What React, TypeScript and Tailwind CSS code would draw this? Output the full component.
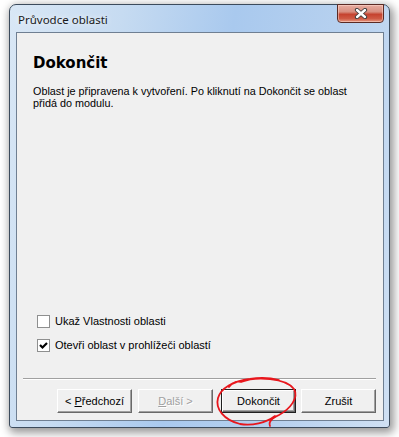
import React from 'react';

const sans = { fontFamily: '"Liberation Sans", Arial, sans-serif' };

function CloseGlyph() {
    return (
        <svg width="14" height="11" viewBox="0 0 14 11">
            <path d="M3 2 L11 9 M11 2 L3 9" stroke="#3a3a3a" strokeWidth="4.2" strokeLinecap="round" fill="none" />
            <path d="M3 2 L11 9 M11 2 L3 9" stroke="#ffffff" strokeWidth="2.4" strokeLinecap="round" fill="none" />
        </svg>
    );
}

function CheckBox({ checked }: { checked?: boolean }) {
    return (
        <div className="w-[13px] h-[13px] border border-[#8e8f8f] bg-white flex items-center justify-center">
            {checked && (
                <svg width="9" height="9" viewBox="0 0 9 9">
                    <path d="M1 4 L3.5 6.5 L8 2" stroke="#000" strokeWidth="2.2" fill="none" />
                </svg>
            )}
        </div>
    );
}

interface WizardButtonProps {
    children: React.ReactNode;
    disabled?: boolean;
    isDefault?: boolean;
}

function WizardButton({ children, disabled, isDefault }: WizardButtonProps) {
    return (
        <div
            className={
                isDefault
                    ? "w-[75px] h-[24px] border border-[#202020] flex"
                    : "w-[75px] h-[24px] flex"
            }
        >
            <div
                className="flex-1 flex items-center justify-center bg-[#f0f0f0] border-t border-l border-t-white border-l-white border-b border-r border-b-[#696969] border-r-[#696969] shadow-[inset_-1px_-1px_0_#a0a0a0] text-[11px]"
                style={sans}
            >
                <span
                    className={
                        disabled
                            ? "text-[#a0a0a0] [text-shadow:1px_1px_0_#fff]"
                            : "text-black"
                    }
                >
                    {children}
                </span>
            </div>
        </div>
    );
}

export default function App() {
    return (
        <div className="w-[399px] h-[437px] bg-white relative overflow-hidden">
            <div className="ml-[9px] mt-[4px] w-[381px] h-[424px] rounded-t-[7px] rounded-b-[3px] border border-[#3c4b5c] shadow-[2px_3px_9px_2px_rgba(0,0,0,0.4)] bg-[linear-gradient(100deg,#d9e7f5_0%,#c6dbf1_25%,#a9c9ee_50%,#b7d1ef_75%,#cfe0f3_100%)] flex flex-col">
                <div className="h-[27px] flex items-start pl-[8px] pr-[5px]">
                    <span
                        className="mt-[7px] text-[11.5px] leading-[15px] text-[#1a1a1a] [text-shadow:0_0_6px_#fff]"
                        style={{ fontFamily: '"Noto Sans", "Open Sans", sans-serif' }}
                    >
                        Průvodce oblasti
                    </span>
                    <div className="ml-auto w-[47px] h-[19px] -mt-[1px] rounded-b-[4px] border border-[#5a2a24] bg-[linear-gradient(180deg,#e8aca0_0%,#d88f80_40%,#c5432f_55%,#cf5a44_80%,#e59a83_100%)] shadow-[inset_0_0_0_1px_rgba(255,220,210,0.5)] flex items-center justify-center">
                        <CloseGlyph />
                    </div>
                </div>
                <div className="flex-1 ml-[6px] mr-[5px] mb-[6px] border border-[#6f7f92] bg-[#f0f0f0] flex flex-col" style={sans}>
                    <h2
                        className="mt-[21px] ml-[16px] text-[15px] leading-[18px] font-bold text-black"
                        style={{ fontFamily: '"DejaVu Sans", Verdana, sans-serif' }}
                    >
                        Dokončit
                    </h2>
                    <p className="mt-[13px] ml-[16px] w-[330px] text-[10.8px] leading-[12px] text-black">
                        Oblast je připravena k vytvoření. Po kliknutí na Dokončit se oblast přidá do modulu.
                    </p>
                    <div className="flex-1" />
                    <div className="ml-[20px] flex flex-col gap-[11px] text-[11px] text-black">
                        <div className="flex items-center h-[13px] gap-[5px]">
                            <CheckBox />
                            <span>Ukaž Vlastnosti oblasti</span>
                        </div>
                        <div className="flex items-center h-[13px] gap-[5px]">
                            <CheckBox checked />
                            <span>Otevři oblast v prohlížeči oblastí</span>
                        </div>
                    </div>
                    <div className="mt-[26px] ml-[6px] mr-[7px] border-t border-t-[#a0a0a0] border-b border-b-white" />
                    <div className="mt-[9px] mb-[7px] mr-[7px] flex justify-end items-center">
                        <WizardButton>
                            &lt; <span className="underline">P</span>ředchozí
                        </WizardButton>
                        <div className="w-[6px]" />
                        <WizardButton disabled>
                            <span className="underline">D</span>alší &gt;
                        </WizardButton>
                        <div className="w-[8px]" />
                        <WizardButton isDefault>Dokončit</WizardButton>
                        <div className="w-[5px]" />
                        <WizardButton>Zrušit</WizardButton>
                    </div>
                </div>
            </div>
            <svg className="absolute left-0 top-0 pointer-events-none" width="399" height="437" viewBox="0 0 399 437">
                <path
                    d="M229 387 C233 382 237 381 241 382 C256 376 286 378 294 389 C299 398 290 409 279 415 C273 418 268 421 270 426 M275 416 C266 423 252 426 240 424 C224 420 215 409 218 398 C221 388 233 381 250 379 C262 377 271 378 279 380"
                    stroke="#e8161c"
                    strokeWidth="1.8"
                    fill="none"
                    strokeLinecap="round"
                />
            </svg>
        </div>
    );
}
